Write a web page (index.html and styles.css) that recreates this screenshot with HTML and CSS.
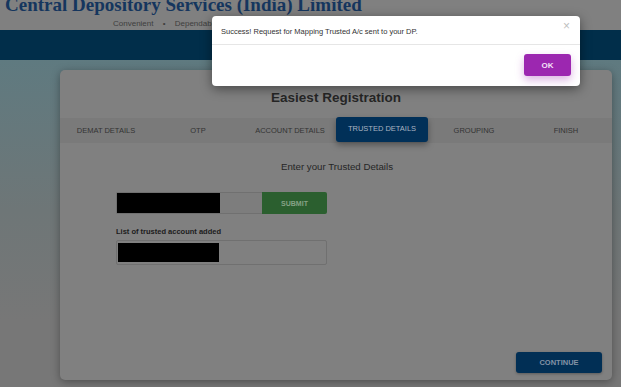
FILE: index.html
```html
<!DOCTYPE html>
<html>
<head>
<meta charset="utf-8">
<link rel="stylesheet" href="styles.css">
</head>
<body>
<div class="page">
  <header class="top">
    <div class="brand">Central Depository Services (India) Limited</div>
    <div class="tagline">Convenient <span class="dot">•</span> Dependable <span class="dot">•</span> Secure</div>
  </header>
  <div class="navbar"></div>
  <main class="main">
    <section class="card">
      <h1 class="card-title">Easiest Registration</h1>
      <nav class="tabs">
        <div class="tab">DEMAT DETAILS</div>
        <div class="tab">OTP</div>
        <div class="tab">ACCOUNT DETAILS</div>
        <div class="tab active">TRUSTED DETAILS</div>
        <div class="tab">GROUPING</div>
        <div class="tab">FINISH</div>
      </nav>
      <div class="content">
        <p class="lead">Enter your Trusted Details</p>
        <div class="form">
          <div class="input-group">
            <div class="input"><span class="redact"></span></div>
            <button class="submit">SUBMIT</button>
          </div>
          <div class="label">List of trusted account added</div>
          <div class="list-box"><span class="redact small"></span></div>
        </div>
        <div class="actions">
          <button class="continue">CONTINUE</button>
        </div>
      </div>
    </section>
  </main>
</div>
<div class="modal">
  <div class="modal-head">
    <span class="msg">Success! Request for Mapping Trusted A/c sent to your DP.</span>
    <span class="close">×</span>
  </div>
  <div class="modal-foot">
    <button class="ok">OK</button>
  </div>
</div>
</body>
</html>
```
FILE: styles.css
```css
* { box-sizing: border-box; }
html, body { margin: 0; padding: 0; }
body {
  width: 621px;
  height: 387px;
  overflow: hidden;
  font-family: "Liberation Sans", Arial, sans-serif;
  background: #777;
  position: relative;
}
.page { display: flex; flex-direction: column; height: 387px; }
.top {
  height: 30px;
  background: #808080;
  position: relative;
}
.brand {
  font-family: "Liberation Serif", "Times New Roman", serif;
  font-weight: bold;
  font-size: 19px;
  color: #15365e;
  line-height: 19px;
  margin-top: -5px;
  padding-left: 5px;
  white-space: nowrap;
}
.tagline {
  font-size: 8px;
  color: #3e3e3e;
  padding-left: 113px;
  margin-top: 5px;
  line-height: 9px;
  white-space: nowrap;
  word-spacing: 1px;
}
.tagline .dot { margin: 0 6px; }
.navbar { height: 30px; background: #012e4a; }
.main {
  flex: 1;
  background: linear-gradient(#5f7a80 0px, #6e7677 150px, #777 260px);
  padding: 10px 9px 7px 60px;
  display: flex;
}
.card {
  flex: 1;
  background: #808080;
  border-radius: 5px;
  box-shadow: 0 2px 8px rgba(0,0,0,.35);
  display: flex;
  flex-direction: column;
}
.card-title {
  margin: 19px 0 0;
  text-align: center;
  font-size: 13.5px;
  line-height: 17px;
  font-weight: bold;
  color: #262626;
}
.tabs {
  margin-top: 12px;
  height: 25px;
  background: #7a7a7a;
  display: grid;
  grid-template-columns: repeat(6, 1fr);
  align-items: center;
}
.tab {
  text-align: center;
  font-size: 7.5px;
  color: #333;
  line-height: 25px;
  height: 25px;
}
.tab.active {
  background: #013058;
  color: #a9b3c1;
  border-radius: 3px;
  height: 25px;
  margin-top: -2px;
  line-height: 24px;
  box-shadow: 0 3px 6px rgba(0,0,0,.35);
}
.content {
  flex: 1;
  display: flex;
  flex-direction: column;
}
.lead {
  margin: 18px 0 0;
  text-align: center;
  font-size: 9.7px;
  line-height: 12px;
  color: #262626;
  padding-left: 2px;
}
.form {
  margin-left: 56px;
  width: 211px;
  margin-top: 19px;
}
.input-group { display: flex; height: 22px; }
.input {
  width: 146px;
  background: #7d7d7d;
  border: 1px solid #707070;
  border-right: none;
  border-radius: 2px 0 0 2px;
  position: relative;
}
.redact {
  display: block;
  background: #000;
  width: 103px;
  height: 100%;
}
.submit {
  flex: 1;
  border: none;
  background: #2b5f2f;
  color: #86a286;
  font-family: inherit;
  font-size: 7px;
  font-weight: bold;
  padding: 0;
  border-radius: 0 2px 2px 0;
}
.label {
  margin-top: 13px;
  font-size: 7.5px;
  font-weight: bold;
  color: #1c1c1c;
  line-height: 9px;
}
.list-box {
  margin-top: 4px;
  height: 25px;
  border: 1px solid #707070;
  border-radius: 2px;
  padding: 2px 0 2px 1px;
}
.redact.small { width: 101px; height: 19px; }
.actions {
  margin-top: auto;
  display: flex;
  justify-content: flex-end;
  padding: 0 10px 7px 0;
}
.continue {
  width: 86px;
  height: 21px;
  border: none;
  border-radius: 3px;
  background: #012f55;
  color: #8493a6;
  font-family: inherit;
  font-size: 7.5px;
  font-weight: bold;
  padding: 0;
  box-shadow: 0 1px 3px rgba(0,0,0,.3);
}
.modal {
  position: absolute;
  left: 212px;
  top: 16px;
  width: 368px;
  height: 70px;
  background: #fff;
  border-radius: 4px;
  box-shadow: 0 3px 12px rgba(0,0,0,.45);
  display: flex;
  flex-direction: column;
}
.modal-head {
  height: 29px;
  border-bottom: 1px solid #e6e6e6;
  display: flex;
  align-items: center;
  justify-content: space-between;
  padding: 0 9px;
}
.msg {
  font-size: 7.5px;
  color: #333;
  margin-top: 2px;
}
.close {
  font-size: 12px;
  color: #c0c0c0;
  margin-top: -9px;
  margin-right: 1px;
}
.modal-foot {
  flex: 1;
  display: flex;
  justify-content: flex-end;
  align-items: flex-start;
  padding: 9px 9px 0 0;
}
.ok {
  width: 47px;
  height: 22px;
  border: none;
  border-radius: 3px;
  background: #9c27b0;
  color: #f3e1f6;
  font-family: inherit;
  font-size: 8px;
  font-weight: bold;
  padding: 0;
  box-shadow: 0 4px 8px rgba(156,39,176,.35);
}
```
